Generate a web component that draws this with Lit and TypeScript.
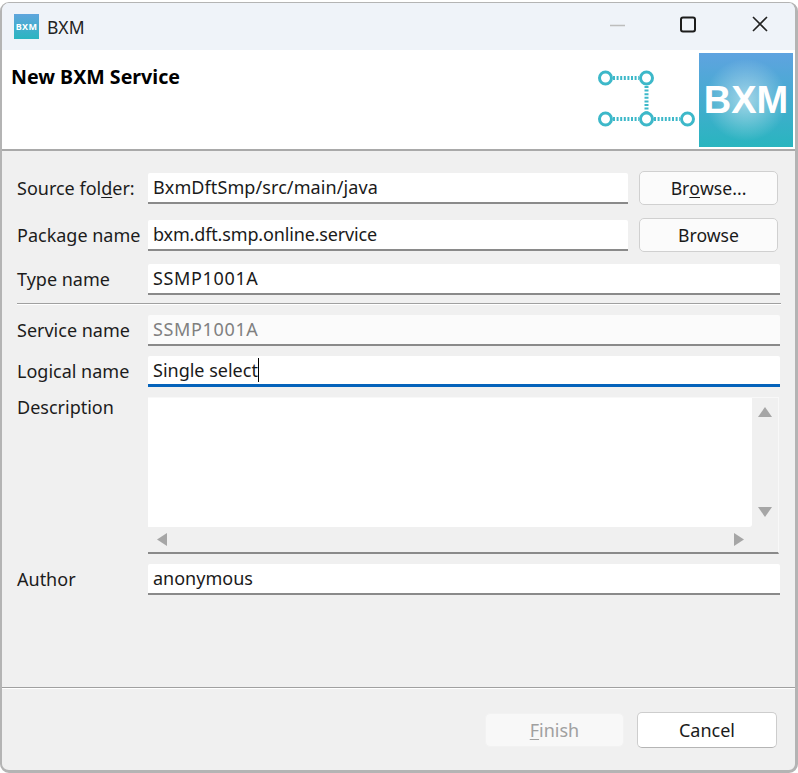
import { LitElement, html, css, svg } from "lit";
import { customElement } from "lit/decorators.js";

@customElement("app-root")
export class AppRoot extends LitElement {
  static styles = css`
    :host { display: block; width: 798px; height: 773px; background: #fff; font-family: "Noto Sans", sans-serif; font-size: 18px; color: #1a1a1a; overflow: hidden; }
    * { box-sizing: border-box; }
    .win { margin-top: 2px; height: 771px; border: 2px solid #b4b4b4; border-right-width: 3px; border-bottom-width: 3px; border-top-width: 1px; border-radius: 9px; background: #f0f0f0; overflow: hidden; display: flex; flex-direction: column; }
    .titlebar { height: 47px; flex: none; background: #eff3f9; display: flex; align-items: center; padding-left: 12px; }
    .appicon { width: 25px; height: 25px; background: linear-gradient(#5fa5dd, #2ab5c0); color: #fff; font-size: 9px; font-weight: 700; display: flex; align-items: center; justify-content: center; letter-spacing: .3px; }
    .apptitle { margin-left: 8px; color: #222; font-size: 17.5px; }
    .winctl { margin-left: auto; display: flex; }
    .winctl svg { display: block; }
    .header { height: 101px; flex: none; background: #fff; border-bottom: 2px solid #a9a9a9; display: flex; }
    .htitle { font-weight: 700; font-size: 19.6px; color: #000; padding: 13px 0 0 9px; line-height: 27px; }
    .hright { margin-left: auto; display: flex; align-items: flex-start; padding: 3px 2px 0 0; }
    .logo { padding-top: 15px; }
    .logo svg { display: block; }
    .tile { width: 94px; height: 94px; margin-left: 4px; background: radial-gradient(circle at 50% 50%, rgba(255,255,255,.5) 0%, rgba(255,255,255,0) 62%), linear-gradient(#5fa3e0, #29b5bf); color: #fff; font-size: 38px; font-weight: 700; font-family: "Liberation Sans", sans-serif; display: flex; align-items: center; justify-content: center; }
    .body { flex: 1; padding: 22px 15px 0 15px; display: flex; flex-direction: column; }
    .row { display: grid; grid-template-columns: 131px 1fr; align-items: start; }
    .row.btn { grid-template-columns: 131px 480px 1fr; }
    .lbl { line-height: 31px; white-space: nowrap; color: #1c1c1c; }
    .input { height: 31px; background: #fff; border-bottom: 2px solid #8a8a8a; border-radius: 2px 2px 0 0; padding-left: 5px; line-height: 29px; white-space: nowrap; color: #1a1a1a; }
    .input.dis { color: #808080; background: #fbfbfb; }
    .input.focus { border-bottom-color: #0563bb; border-bottom-width: 3px; }
    .wide { letter-spacing: .65px; }
    .tight { letter-spacing: -.15px; }
    .loose { letter-spacing: .09px; }
    .caret { border-right: 1.5px solid #000; }
    .button { height: 34px; margin: -2px 0 -1px 11px; width: 139px; background: #fbfbfb; border: 1.5px solid #d0d0d0; border-radius: 5px; display: flex; align-items: center; justify-content: center; color: #1a1a1a; font-size: 17.6px; }
    .mt1 { margin-top: 16px; }
    .mt2 { margin-top: 13px; }
    .mt3 { margin-top: 10px; }
    hr { margin: 8px 0 10px 0; border: 0; height: 2px; flex: none; background: linear-gradient(#a0a0a0 50%, #fff 50%); width: 764px; }
    .lbl.top { line-height: 20px; }
    .area { height: 157px; width: 631px; background: #f0f0f0; border-bottom: 2px solid #8a8a8a; display: grid; grid-template-columns: 604px 1fr; grid-template-rows: 129px 1fr; border-right: 1px solid #f8f8f8; border-top: 1px solid #f8f8f8; }
    .textpane { background: #fff; border-radius: 0 0 3px 0; }
    .vbar { display: flex; flex-direction: column; justify-content: space-between; align-items: center; padding: 9px 0 10px; }
    .hbar { display: flex; justify-content: space-between; align-items: center; padding: 0 8px 0 9px; }
    .area svg { display: block; }
    .footer { height: 83px; flex: none; border-top: 1px solid #a0a0a0; box-shadow: inset 0 1px 0 #fff; display: flex; justify-content: flex-end; align-items: flex-start; padding: 24px 18px 0 0; gap: 13px; }
    .button.f { margin: 0; width: 139px; font-size: 18px; }
    .button.finish { margin-top: 1px; height: 34px; background: #f8f8f8; border: 1px solid #f2f2f2; color: #a0a0a0; }
    .button.cancel { width: 140px; height: 36px; background: #fff; border-color: #cdcdcd; border-bottom-color: #b5b5b5; }
    u { text-underline-offset: 2px; }
  `;

  private logo() {
    const c = "#3db8c9";
    return html`<svg width="100" height="60" viewBox="0 0 100 60">
      ${svg`<g fill="none" stroke=${c}>
        <g stroke-width="4" stroke-dasharray="2 1.6">
          <path d="M18 10H44"/><path d="M18 51H44"/><path d="M59 51H85"/><path d="M51.5 18V44"/>
        </g>
        <g stroke-width="3" fill="#fff">
          <circle cx="10.5" cy="10" r="6"/><circle cx="51.5" cy="10" r="6"/><circle cx="10.5" cy="51" r="6"/><circle cx="51.5" cy="51" r="6"/><circle cx="92.5" cy="51" r="6"/>
        </g></g>`}
    </svg>`;
  }

  render() {
    return html`<div class="win">
      <div class="titlebar">
        <div class="appicon">BXM</div>
        <div class="apptitle">BXM</div>
        <div class="winctl">
          <svg width="186" height="47" viewBox="0 0 186 47" fill="none">
            <path d="M1 22.5H16" stroke="#bdbdbd" stroke-width="1.5"/>
            <rect x="72" y="14.5" width="14" height="14" rx="2" stroke="#1c1c1c" stroke-width="2"/>
            <path d="M144 14L158 28M158 14L144 28" stroke="#222" stroke-width="1.6"/>
          </svg>
        </div>
      </div>
      <div class="header">
        <div class="htitle">New BXM Service</div>
        <div class="hright">
          <div class="logo">${this.logo()}</div>
          <div class="tile">BXM</div>
        </div>
      </div>
      <div class="body">
        <div class="row btn"><div class="lbl">Source fol<u>d</u>er:</div><div class="input loose">BxmDftSmp/src/main/java</div><div class="button">Br<u>o</u>wse...</div></div>
        <div class="row btn mt1"><div class="lbl">Package name</div><div class="input tight">bxm.dft.smp.online.service</div><div class="button">Browse</div></div>
        <div class="row mt2"><div class="lbl">Type name</div><div class="input wide">SSMP1001A</div></div>
        <hr />
        <div class="row"><div class="lbl">Service name</div><div class="input dis wide">SSMP1001A</div></div>
        <div class="row mt3"><div class="lbl">Logical name</div><div class="input focus"><span class="caret">Single select</span></div></div>
        <div class="row mt3"><div class="lbl top">Description</div>
          <div class="area">
            <div class="textpane"></div>
            <div class="vbar">
              <svg width="14" height="10"><path d="M7 0L14 10H0Z" fill="#a6a6a6"/></svg>
              <svg width="14" height="10"><path d="M0 0H14L7 10Z" fill="#a6a6a6"/></svg>
            </div>
            <div class="hbar">
              <svg width="10" height="13"><path d="M10 0V13L0 6.5Z" fill="#a6a6a6"/></svg>
              <svg width="10" height="13"><path d="M0 0V13L10 6.5Z" fill="#a6a6a6"/></svg>
            </div>
            <div></div>
          </div>
        </div>
        <div class="row mt3"><div class="lbl">Author</div><div class="input">anonymous</div></div>
      </div>
      <div class="footer">
        <div class="button f finish"><u>F</u>inish</div>
        <div class="button f cancel">Cancel</div>
      </div>
    </div>`;
  }
}
